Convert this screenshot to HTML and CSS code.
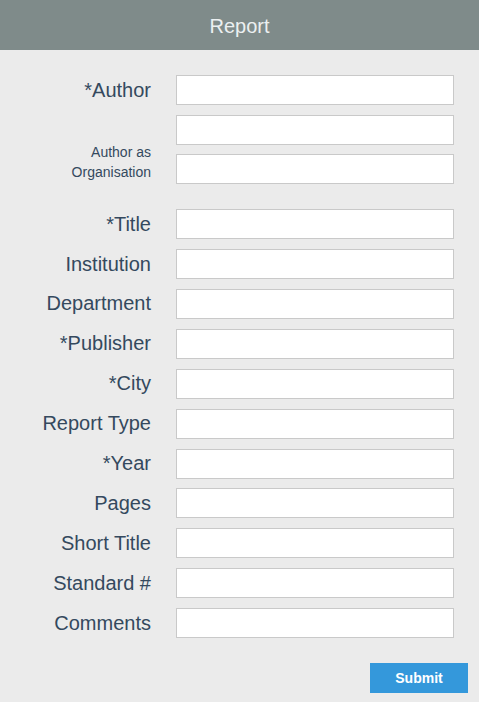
FILE: index.html
```html
<!DOCTYPE html>
<html>
<head>
<meta charset="utf-8">
<link rel="stylesheet" href="styles.css">
</head>
<body>
<header class="bar">Report</header>
<form class="form">
  <div class="group group-author">
    <label class="lbl">*Author</label><input class="field" type="text">
    <span class="lbl"></span><input class="field" type="text">
    <label class="lbl small">Author as<br>Organisation</label><input class="field" type="text">
  </div>
  <div class="group">
    <label class="lbl">*Title</label><input class="field" type="text">
    <label class="lbl">Institution</label><input class="field" type="text">
    <label class="lbl">Department</label><input class="field" type="text">
    <label class="lbl">*Publisher</label><input class="field" type="text">
    <label class="lbl">*City</label><input class="field" type="text">
    <label class="lbl">Report Type</label><input class="field" type="text">
    <label class="lbl">*Year</label><input class="field" type="text">
    <label class="lbl">Pages</label><input class="field" type="text">
    <label class="lbl">Short Title</label><input class="field" type="text">
    <label class="lbl">Standard #</label><input class="field" type="text">
    <label class="lbl">Comments</label><input class="field" type="text">
  </div>
  <div class="actions">
    <button class="submit" type="button">Submit</button>
  </div>
</form>
</body>
</html>
```
FILE: styles.css
```css
html, body {
  margin: 0;
  padding: 0;
  background: #ebebeb;
  font-family: "Liberation Sans", Arial, sans-serif;
}
.bar {
  box-sizing: border-box;
  height: 50px;
  padding-top: 3px;
  background: #7f8b8a;
  color: #ecf0f1;
  font-size: 20px;
  display: flex;
  align-items: center;
  justify-content: center;
}
.form {
  padding-top: 25px;
}
.group {
  display: grid;
  grid-template-columns: 151px 278px;
  column-gap: 25px;
  row-gap: 9.9px;
  grid-auto-rows: 30px;
  margin-bottom: 25px;
}
.group-author {
  row-gap: 9.6px;
}
.lbl {
  font-size: 20px;
  color: #34495e;
  text-align: right;
  align-self: center;
  white-space: nowrap;
}
.lbl.small {
  font-size: 14px;
  line-height: 20px;
  align-self: end;
  margin-bottom: 2px;
}
.field {
  box-sizing: border-box;
  width: 278px;
  height: 30px;
  margin: 0;
  border: 1px solid #c9c9c9;
  background: #fff;
  outline: none;
  padding: 0 6px;
}
.actions {
  display: flex;
  justify-content: flex-end;
  padding-right: 11px;
}
.submit {
  width: 98px;
  height: 30px;
  border: none;
  background: #3498db;
  color: #fff;
  font-family: "Liberation Sans", Arial, sans-serif;
  font-weight: bold;
  font-size: 14px;
  padding: 0;
}
```
